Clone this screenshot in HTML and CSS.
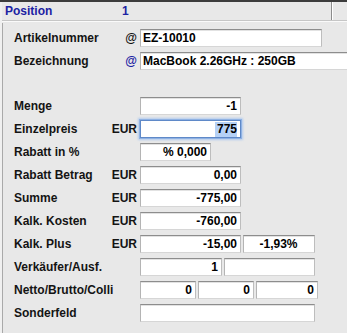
FILE: index.html
```html
<!DOCTYPE html>
<html>
<head>
<meta charset="utf-8">
<link rel="stylesheet" href="styles.css">
</head>
<body>
<div class="topline"></div>
<div class="frame">
  <div class="edge"></div>
  <div class="main">
    <div class="header">
      <div class="hcell hpos"><span class="htitle">Position</span><span class="hnum">1</span></div>
      <div class="hcell hrest"></div>
    </div>
    <div class="form">
      <div class="row"><span class="label">Artikelnummer</span><span class="unit">@</span><div class="field w181 left">EZ-10010</div></div>
      <div class="row"><span class="label">Bezeichnung</span><span class="unit blue">@</span><div class="field w230 left">MacBook 2.26GHz : 250GB</div></div>
      <div class="row blank"></div>
      <div class="row"><span class="label">Menge</span><span class="unit"></span><div class="field w100">-1</div></div>
      <div class="row"><span class="label">Einzelpreis</span><span class="unit">EUR</span><div class="field w100 focus"><span class="sel">775</span></div></div>
      <div class="row"><span class="label">Rabatt in %</span><span class="unit"></span><div class="field w71">% 0,000</div></div>
      <div class="row"><span class="label">Rabatt Betrag</span><span class="unit">EUR</span><div class="field w100">0,00</div></div>
      <div class="row"><span class="label">Summe</span><span class="unit">EUR</span><div class="field w100">-775,00</div></div>
      <div class="row"><span class="label">Kalk. Kosten</span><span class="unit">EUR</span><div class="field w100">-760,00</div></div>
      <div class="row"><span class="label">Kalk. Plus</span><span class="unit">EUR</span><div class="fields"><div class="field w100">-15,00</div><div class="field w72 center">-1,93%</div></div></div>
      <div class="row"><span class="label">Verkäufer/Ausf.</span><span class="unit"></span><div class="fields"><div class="field w81">1</div><div class="field w91"></div></div></div>
      <div class="row"><span class="label">Netto/Brutto/Colli</span><span class="unit"></span><div class="fields"><div class="field w56">0</div><div class="field w57">0</div><div class="field w61">0</div></div></div>
      <div class="row"><span class="label">Sonderfeld</span><span class="unit"></span><div class="field w175"></div></div>
    </div>
  </div>
</div>
</body>
</html>
```
FILE: styles.css
```css
html, body {
  margin: 0;
  padding: 0;
  background: #e8e8e8;
  overflow: hidden;
  width: 347px;
  height: 333px;
}
body {
  font-family: "Liberation Sans", Arial, sans-serif;
  font-weight: bold;
  font-size: 12px;
  color: #141414;
}
.topline {
  height: 2px;
  background: #3c3c3c;
}
.frame {
  display: flex;
  height: 331px;
}
.edge {
  width: 2px;
  background: #f0f0f0;
  flex: none;
}
.main {
  flex: 1;
  min-width: 0;
  overflow: hidden;
  display: flex;
  flex-direction: column;
}
.header {
  display: flex;
  height: 18px;
  border-bottom: 1px solid #c6c6c6;
  box-shadow: 0 1px 0 #fafafa;
  background: #e8e8e8;
}
.hcell {
  display: flex;
  align-items: center;
}
.hpos {
  width: 329px;
  flex: none;
  border-right: 1px solid #8c8c8c;
  box-shadow: 1px 0 0 #ffffff;
  color: #1b22a3;
  font-size: 12px;
}
.htitle {
  margin-left: 3px;
  width: 117px;
}
.hrest {
  flex: 1;
}
.form {
  flex: 1;
  border-left: 1px solid #a9a9a9;
  margin-top: 2px;
  padding-top: 3px;
  padding-left: 11px;
  display: flex;
  flex-direction: column;
  overflow: hidden;
}
.row {
  height: 23px;
  display: flex;
  align-items: center;
}
.row.blank {
  height: 22px;
}
.label {
  width: 96px;
  flex: none;
}
.unit {
  width: 27px;
  flex: none;
  text-align: right;
  padding-right: 3px;
}
.unit.blue {
  color: #1b22a3;
}
.fields {
  display: flex;
  gap: 2px;
}
.field {
  box-sizing: border-box;
  height: 18px;
  background: #ffffff;
  border: 1px solid;
  border-color: #8d8d8d #bdbdbd #d6d6d6 #b4b4b4;
  box-shadow: inset 0 1px 0 #e2e2e2;
  text-align: right;
  padding: 0 3px 0 2px;
  line-height: 16px;
  white-space: nowrap;
  overflow: hidden;
  flex: none;
  color: #000;
}
.field.left { text-align: left; }
.field.center { text-align: center; }
.field.focus {
  border-color: #5f89c8;
  box-shadow: 0 0 0 1px #8fb2e4, 0 0 2px 2px #b2cbee;
}
.sel {
  background: #b5d1f6;
  display: inline-block;
  line-height: 15px;
  padding-left: 2px;
}
.w100 { width: 101px; }
.w181 { width: 182px; }
.w230 { width: 230px; }
.w71 { width: 71px; }
.w72 { width: 72px; }
.w81 { width: 82px; }
.w91 { width: 91px; }
.w56 { width: 56px; }
.w57 { width: 56px; }
.w61 { width: 62px; }
.w175 { width: 175px; }
```
